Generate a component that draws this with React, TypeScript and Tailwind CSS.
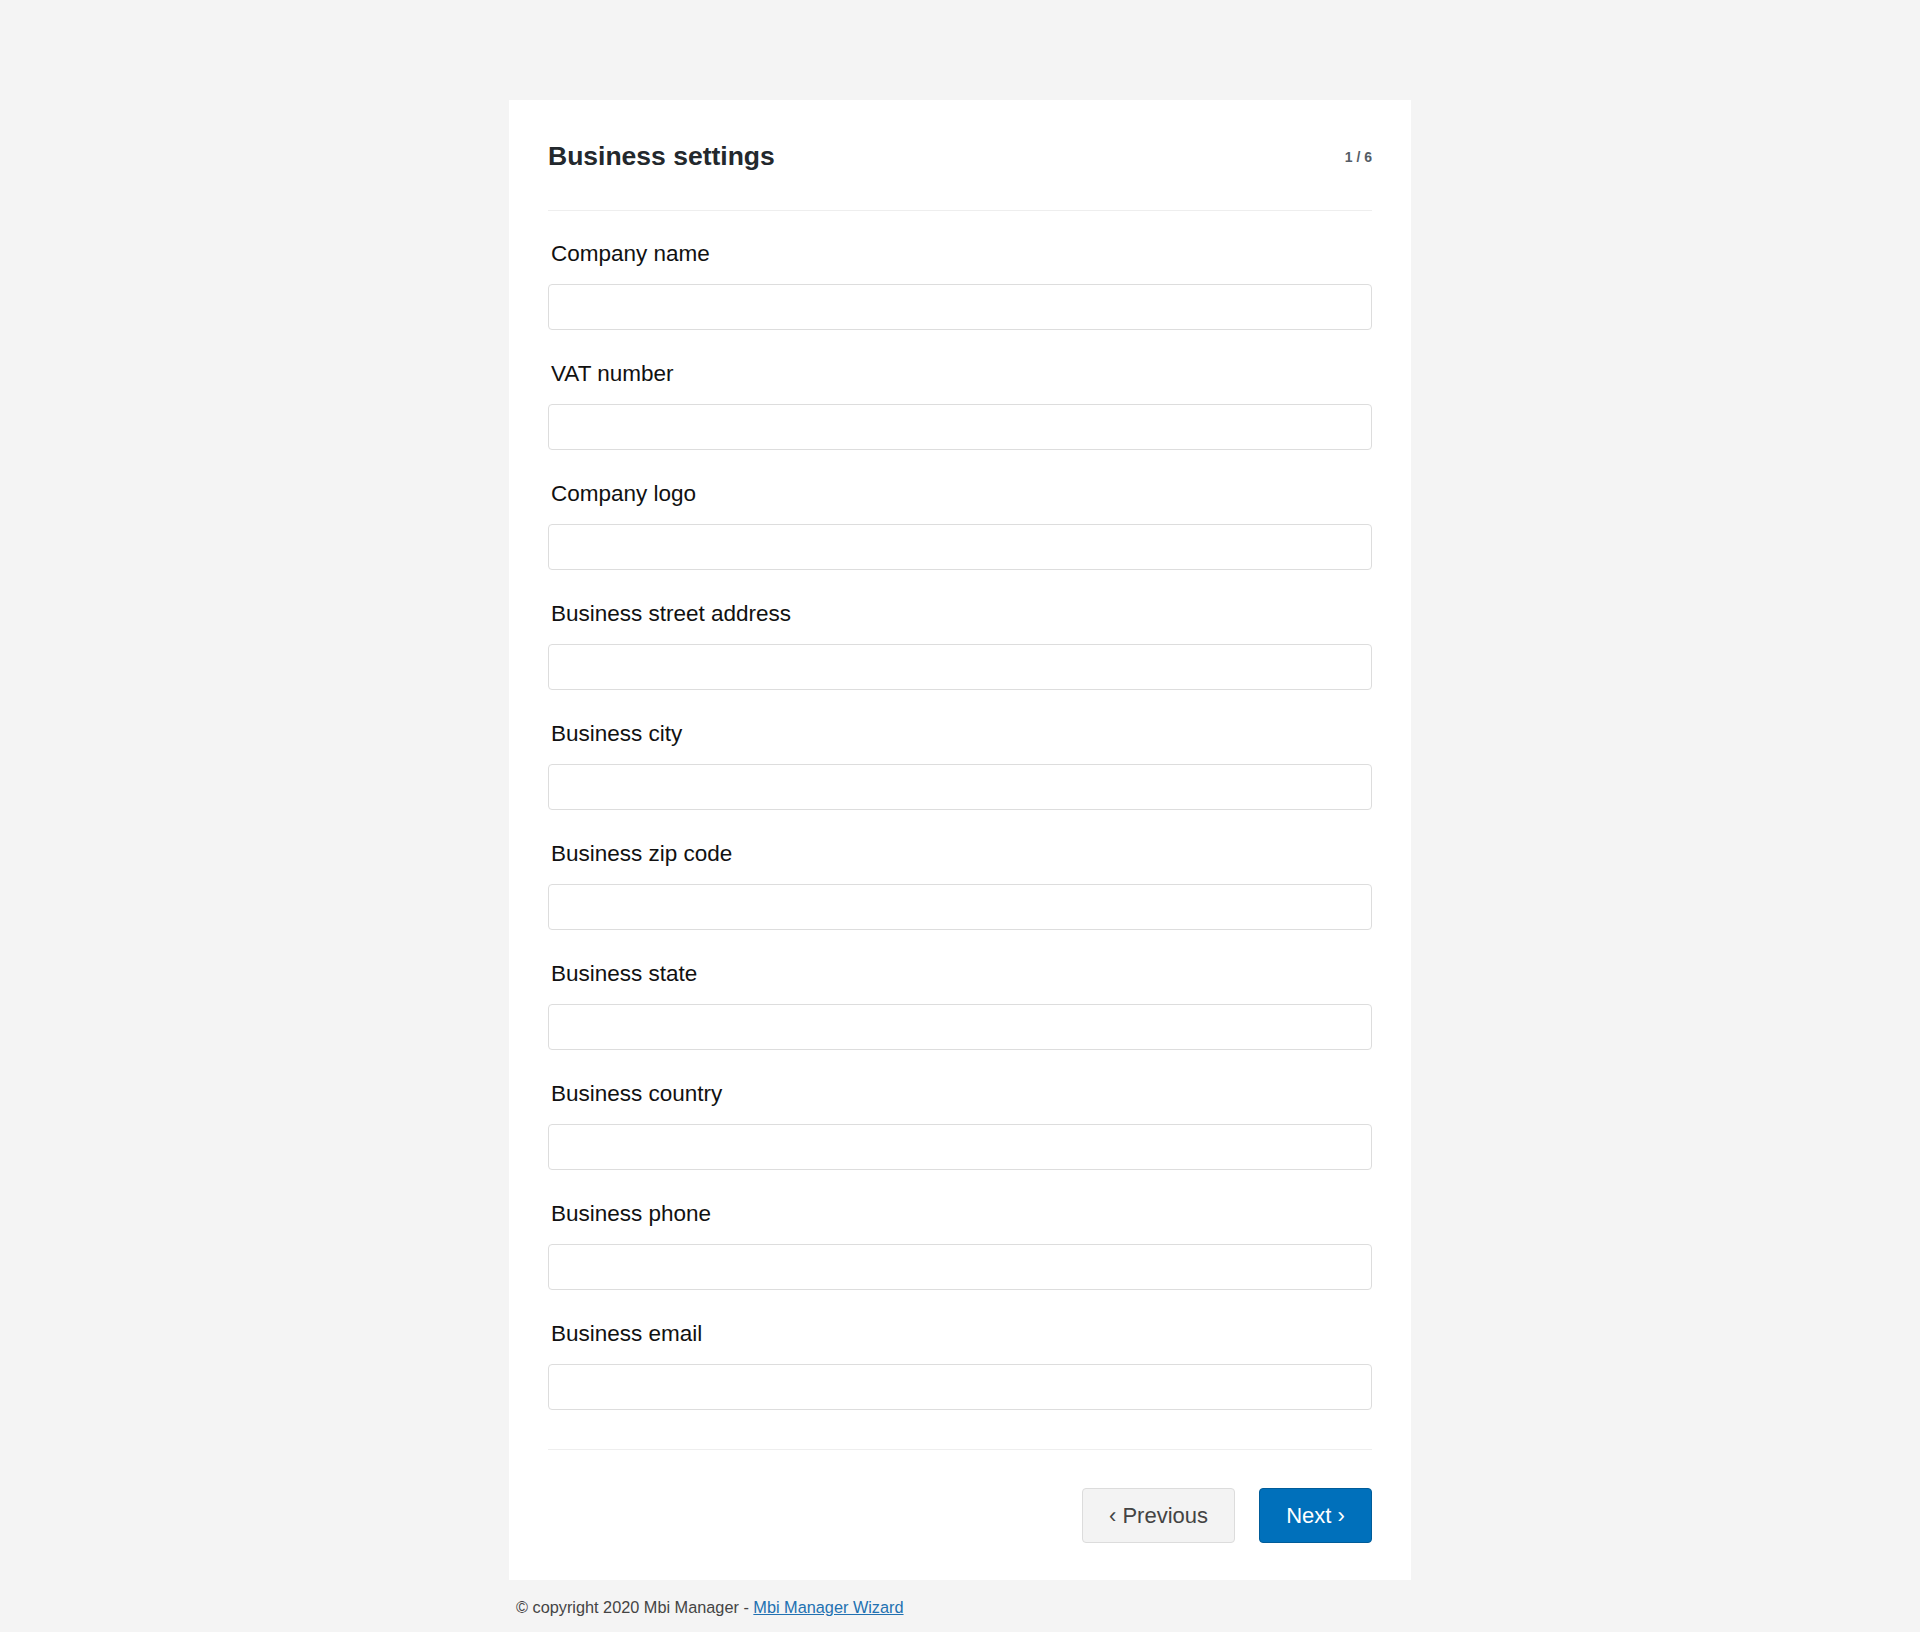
const FIELDS = [
  "Company name",
  "VAT number",
  "Company logo",
  "Business street address",
  "Business city",
  "Business zip code",
  "Business state",
  "Business country",
  "Business phone",
  "Business email",
];

export default function App() {
  return (
    <div className="min-h-[1632px] bg-[#f4f4f4] pt-[100px] font-['Liberation_Sans',Arial,sans-serif]">
      <div className="mx-auto w-[902px]">
        <div className="bg-white px-[39px] pb-[37px]">
          <div className="flex h-[111px] items-center justify-between border-b border-[#eeeeee] pt-[3px]">
            <h1 className="text-[26.5px] font-bold leading-none text-[#23282d]">Business settings</h1>
            <span className="pt-[2px] text-[14px] font-bold text-[#555d66]">1 / 6</span>
          </div>

          <div className="flex flex-col gap-[31px] pt-[30px] pb-[39px] border-b border-[#eeeeee]">
            {FIELDS.map((label) => (
              <div key={label}>
                <label className="block pl-[3px] text-[22.5px] leading-[26px] text-[#111111]">{label}</label>
                <input
                  type="text"
                  className="mt-[17px] block h-[46px] w-full rounded-[4px] border border-[#dddddd] bg-white px-3 text-[18px] outline-none"
                />
              </div>
            ))}
          </div>

          <div className="flex justify-end gap-[24px] pt-[38px]">
            <button className="h-[55px] w-[153px] rounded-[4px] border border-[#dcdcdc] bg-[#f3f3f3] text-[22px] text-[#444444]">
              ‹ Previous
            </button>
            <button className="h-[55px] w-[113px] rounded-[4px] border border-[#005c99] bg-[#0070bb] text-[22px] text-white">
              Next ›
            </button>
          </div>
        </div>

        <p className="mt-[15px] pl-[7px] text-[16.3px] leading-6 text-[#444444]">
          © copyright 2020 Mbi Manager -{" "}
          <a href="#" className="text-[#2271b1] underline">
            Mbi Manager Wizard
          </a>
        </p>
      </div>
    </div>
  );
}
